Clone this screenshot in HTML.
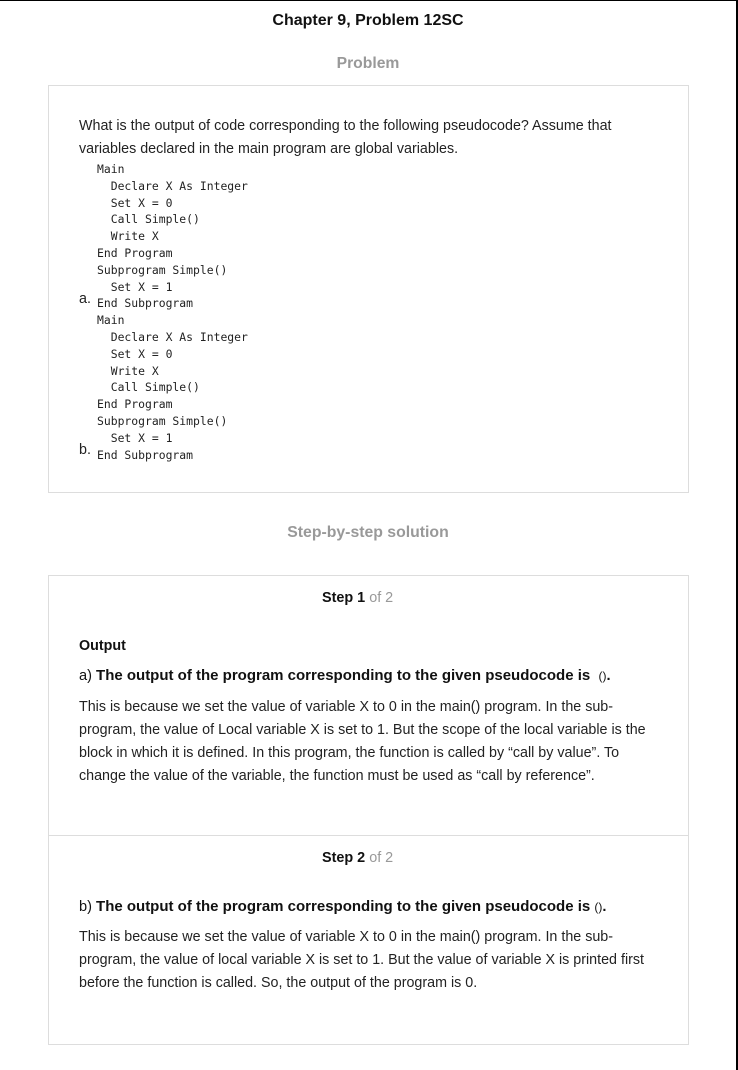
<!DOCTYPE html>
<html><head><meta charset="utf-8"><style>
body{margin:0;width:738px;height:1070px;background:#fff;font-family:"Liberation Sans",Arial,sans-serif;color:#222;position:relative;overflow:hidden}
.frame{position:absolute;left:0;top:0;width:738px;height:1070px;border-top:1px solid #000;border-right:2px solid #000;box-sizing:border-box}
.abs{position:absolute;white-space:nowrap}
.c{left:0;width:736px;text-align:center}
.box{position:absolute;left:48px;width:641px;border:1px solid #ddd;box-sizing:border-box}
.t{font-size:14.3px;left:79px}
pre{margin:0;font-family:"DejaVu Sans Mono",monospace;font-size:11.4px;line-height:16.8px;position:absolute;left:97px;color:#222}
.b{font-weight:bold}
</style></head><body>
<div class="frame"></div>
<div class="abs c b" style="top:12px;font-size:16px;color:#111">Chapter 9, Problem 12SC</div>
<div class="abs c b" style="top:55px;font-size:15.7px;color:#999">Problem</div>
<div class="box" style="top:85px;height:408px"></div>
<div class="abs t" style="top:115px;line-height:23px">What is the output of code corresponding to the following pseudocode? Assume that<br>variables declared in the main program are global variables.</div>
<pre style="top:161px">Main
  Declare X As Integer
  Set X = 0
  Call Simple()
  Write X
End Program
Subprogram Simple()
  Set X = 1
End Subprogram
Main
  Declare X As Integer
  Set X = 0
  Write X
  Call Simple()
End Program
Subprogram Simple()
  Set X = 1
End Subprogram</pre>
<div class="abs t" style="top:291px">a.</div>
<div class="abs t" style="top:442px">b.</div>
<div class="abs c b" style="top:524px;font-size:15.8px;color:#999">Step-by-step solution</div>
<div class="box" style="top:575px;height:470px"></div>
<div class="abs" style="left:49px;top:835px;width:639px;border-top:1px solid #ddd"></div>
<div class="abs b" style="left:322px;top:590px;font-size:14.4px;color:#111">Step 1 <span style="font-weight:normal;color:#999">of 2</span></div>
<div class="abs t b" style="top:638px;color:#111">Output</div>
<div class="abs t" style="top:667px;color:#111;font-size:14.6px">a) <b style="font-size:15px">The output of the program corresponding to the given pseudocode is &nbsp;</b><span style="font-size:12px">()</span><b>.</b></div>
<div class="abs t" style="top:696px;line-height:23px">This is because we set the value of variable X to 0 in the main() program. In the sub-<br>program, the value of Local variable X is set to 1. But the scope of the local variable is the<br>block in which it is defined. In this program, the function is called by “call by value”. To<br>change the value of the variable, the function must be used as “call by reference”.</div>
<div class="abs b" style="left:322px;top:850px;font-size:14.4px;color:#111">Step 2 <span style="font-weight:normal;color:#999">of 2</span></div>
<div class="abs t" style="top:898px;color:#111;font-size:14.6px">b) <b style="font-size:15px">The output of the program corresponding to the given pseudocode is </b><span style="font-size:12px">()</span><b>.</b></div>
<div class="abs t" style="top:926px;line-height:23px">This is because we set the value of variable X to 0 in the main() program. In the sub-<br>program, the value of local variable X is set to 1. But the value of variable X is printed first<br>before the function is called. So, the output of the program is 0.</div>
</body></html>
